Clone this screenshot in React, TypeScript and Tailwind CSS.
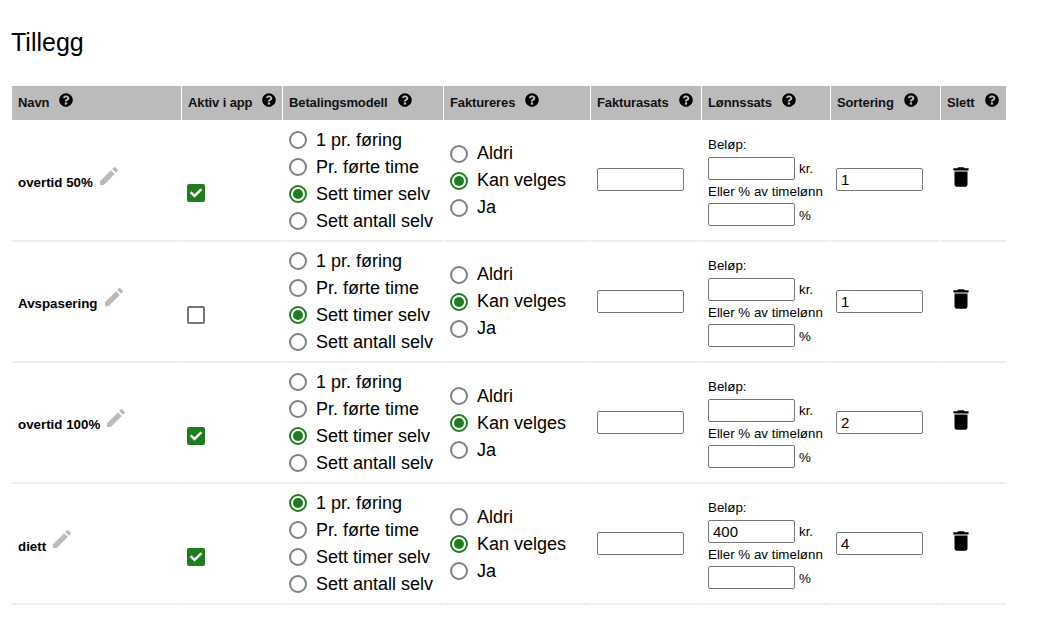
import { FaCheck, FaQuestionCircle } from 'react-icons/fa';
import { MdDelete, MdEdit } from 'react-icons/md';

interface Tillegg {
  navn: string;
  aktiv: boolean;
  betaling: number;
  belop: string;
  sortering: string;
}

const COLS = 'grid grid-cols-[169px_100px_160px_146px_110px_128px_109px_65px] gap-x-px';
const HEADERS = ['Navn', 'Aktiv i app', 'Betalingsmodell', 'Faktureres', 'Fakturasats', 'Lønnssats', 'Sortering', 'Slett'];
const BETALING = ['1 pr. føring', 'Pr. førte time', 'Sett timer selv', 'Sett antall selv'];
const FAKTURERES = ['Aldri', 'Kan velges', 'Ja'];

const rows: Tillegg[] = [
  { navn: 'overtid 50%', aktiv: true, betaling: 2, belop: '', sortering: '1' },
  { navn: 'Avspasering', aktiv: false, betaling: 2, belop: '', sortering: '1' },
  { navn: 'overtid 100%', aktiv: true, betaling: 2, belop: '', sortering: '2' },
  { navn: 'diett', aktiv: true, betaling: 0, belop: '400', sortering: '4' },
];

function Radio({ label, checked }: { label: string; checked: boolean }) {
  return (
    <div className="flex h-[27px] items-center gap-[9px] text-[18px] text-black">
      {checked ? (
        <span className="flex h-[18px] w-[18px] items-center justify-center rounded-full border-2 border-[#1e7e1e]">
          <span className="h-[10px] w-[10px] rounded-full bg-[#1e7e1e]" />
        </span>
      ) : (
        <span className="h-[18px] w-[18px] rounded-full border-2 border-[#808080]" />
      )}
      <span className="whitespace-nowrap">{label}</span>
    </div>
  );
}

function TextBox({ value }: { value: string }) {
  return (
    <input
      readOnly
      value={value}
      className="h-[23px] w-[87px] rounded-[2px] border border-[#767676] px-[4px] text-[15px] text-black outline-none"
    />
  );
}

function Row({ row }: { row: Tillegg }) {
  return (
    <div className={`${COLS} h-[121.1px]`}>
      <div className="flex items-center border-b-2 border-[#eeeeee] pl-[6px]">
        <span className="mt-[5.4px] text-[13.33px] font-bold text-black">{row.navn}</span>
        <MdEdit className="mb-[9px] ml-[4px] text-[24px] text-[#bbbbbb]" />
      </div>
      <div className="border-b-2 border-[#eeeeee] pl-[5px] pt-[63.45px]">
        {row.aktiv ? (
          <span className="flex h-[18px] w-[18px] items-center justify-center rounded-[2px] bg-[#1e7e1e]">
            <FaCheck className="text-[12px] text-white" />
          </span>
        ) : (
          <span className="block h-[18px] w-[18px] rounded-[2px] border-2 border-[#767676]" />
        )}
      </div>
      <div className="flex flex-col justify-center border-b-2 border-[#eeeeee] pl-[6px]">
        {BETALING.map((label, i) => (
          <Radio key={label} label={label} checked={i === row.betaling} />
        ))}
      </div>
      <div className="flex flex-col justify-center border-b-2 border-[#eeeeee] pl-[6px] pt-[0.65px]">
        {FAKTURERES.map((label, i) => (
          <Radio key={label} label={label} checked={i === 1} />
        ))}
      </div>
      <div className="flex items-center border-b-2 border-[#eeeeee] pb-[1.2px] pl-[6px]">
        <TextBox value="" />
      </div>
      <div className="flex flex-col justify-center border-b-2 border-[#eeeeee] pb-[2px] pl-[6px] text-[13.33px] leading-[23.5px] text-black">
        <div>Beløp:</div>
        <div className="flex items-center gap-[4px]">
          <TextBox value={row.belop} />
          <span className="mt-[2px] leading-[20px]">kr.</span>
        </div>
        <div className="whitespace-nowrap">Eller % av timelønn</div>
        <div className="flex items-center gap-[4px]">
          <TextBox value="" />
          <span className="mt-[2px] leading-[20px]">%</span>
        </div>
      </div>
      <div className="flex items-center border-b-2 border-[#eeeeee] pb-[1.2px] pl-[5px]">
        <TextBox value={row.sortering} />
      </div>
      <div className="flex items-center border-b-2 border-[#eeeeee] pl-[7px]">
        <MdDelete className="mb-[6.2px] text-[26px] text-black" />
      </div>
    </div>
  );
}

export default function App() {
  return (
    <div className="min-h-[622px] bg-white pl-[12px] font-['Liberation_Sans',Arial,sans-serif]">
      <h1 className="-ml-px pb-[29px] pt-[27px] text-[25px] leading-[30px] font-normal text-black">Tillegg</h1>
      <div className={`${COLS} pb-px`}>
        {HEADERS.map((h) => (
          <div key={h} className="flex h-[34px] items-center bg-[#bbbbbb] pl-[6px] text-[13px] font-bold tracking-[-0.12px] text-[#111111]">
            <span className="whitespace-nowrap">{h}</span>
            <FaQuestionCircle className="mb-[6px] ml-[10px] text-[14px] text-black" />
          </div>
        ))}
      </div>
      {rows.map((row) => (
        <Row key={row.navn} row={row} />
      ))}
    </div>
  );
}
